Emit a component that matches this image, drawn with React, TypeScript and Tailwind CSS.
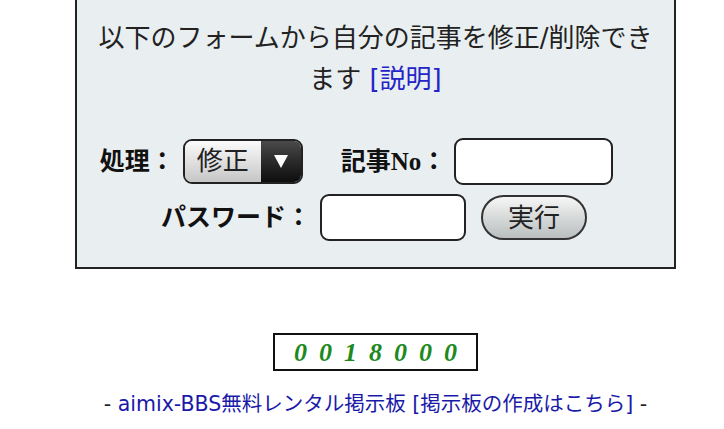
export default function App() {
  const font = { fontFamily: '"DejaVu Sans", "Noto Sans CJK JP", sans-serif' };
  return (
    <div className="w-[724px] h-[429px] bg-white overflow-hidden" style={font}>
      <div className="ml-[75px] w-[601px]">
        {/* Edit form panel */}
        <div className="h-[269px] bg-[#e9eef0] border-x-2 border-b-2 border-[#222] flex flex-col items-center">
          <p className="mt-[18px] text-[26px] leading-[41px] text-[#222] text-center">
            以下のフォームから自分の記事を修正/削除でき
            <br />
            ます <a className="text-[#2424c8]">[説明]</a>
          </p>

          <div className="mt-[38px] mr-[38px] flex items-center text-[#111]">
            <span className="text-[25px] font-bold">処理：</span>
            <div className="ml-[8px] h-[45px] w-[120px] flex rounded-[9px] border-2 border-[#222] overflow-hidden">
              <div className="flex-1 bg-gradient-to-b from-[#fbfbfb] to-[#c6c6c6] flex items-center pl-[12px] text-[26px] text-[#222]">
                修正
              </div>
              <div className="w-[40px] bg-gradient-to-b from-[#4a4a4a] to-[#0e0e0e] flex items-center justify-center">
                <svg width="14" height="13" viewBox="0 0 14 13"><path d="M0 0h14L7 13z" fill="#fff" /></svg>
              </div>
            </div>
            <span className="ml-[38px] text-[25px] font-bold">
              記事<span style={{ fontFamily: '"Liberation Serif", serif' }}>No</span>：
            </span>
            <div className="ml-[8px] w-[159px] h-[47px] bg-white border-2 border-[#222] rounded-[9px]" />
          </div>

          <div className="mt-[9px] mr-[3px] flex items-center text-[#111]">
            <span className="text-[25px] font-bold">パスワード：</span>
            <div className="ml-[9px] w-[146px] h-[47px] bg-white border-2 border-[#222] rounded-[9px]" />
            <button className="ml-[15px] w-[106px] h-[45px] rounded-full border-2 border-[#333] bg-gradient-to-b from-[#f6f6f6] to-[#b9bebe] text-[26px] text-[#222] leading-none">
              実行
            </button>
          </div>
        </div>

        {/* Counter */}
        <div className="mt-[64px] flex justify-center">
          <div
            className="w-[205px] h-[38px] border-2 border-[#111] flex items-center justify-center gap-[12px] text-[26px] font-bold italic text-[#1e8a1e]"
            style={{ fontFamily: '"Liberation Serif", serif' }}
          >
            {"0018000".split("").map((d, i) => (
              <span key={i}>{d}</span>
            ))}
          </div>
        </div>

        {/* Footer */}
        <p className="mt-[18px] text-center text-[20.5px] text-[#222] whitespace-nowrap">
          - <a className="text-[#1a1aa8]">aimix-BBS無料レンタル掲示板</a> <a className="text-[#1a1aa8]">[掲示板の作成はこちら]</a> -
        </p>
      </div>
    </div>
  );
}
